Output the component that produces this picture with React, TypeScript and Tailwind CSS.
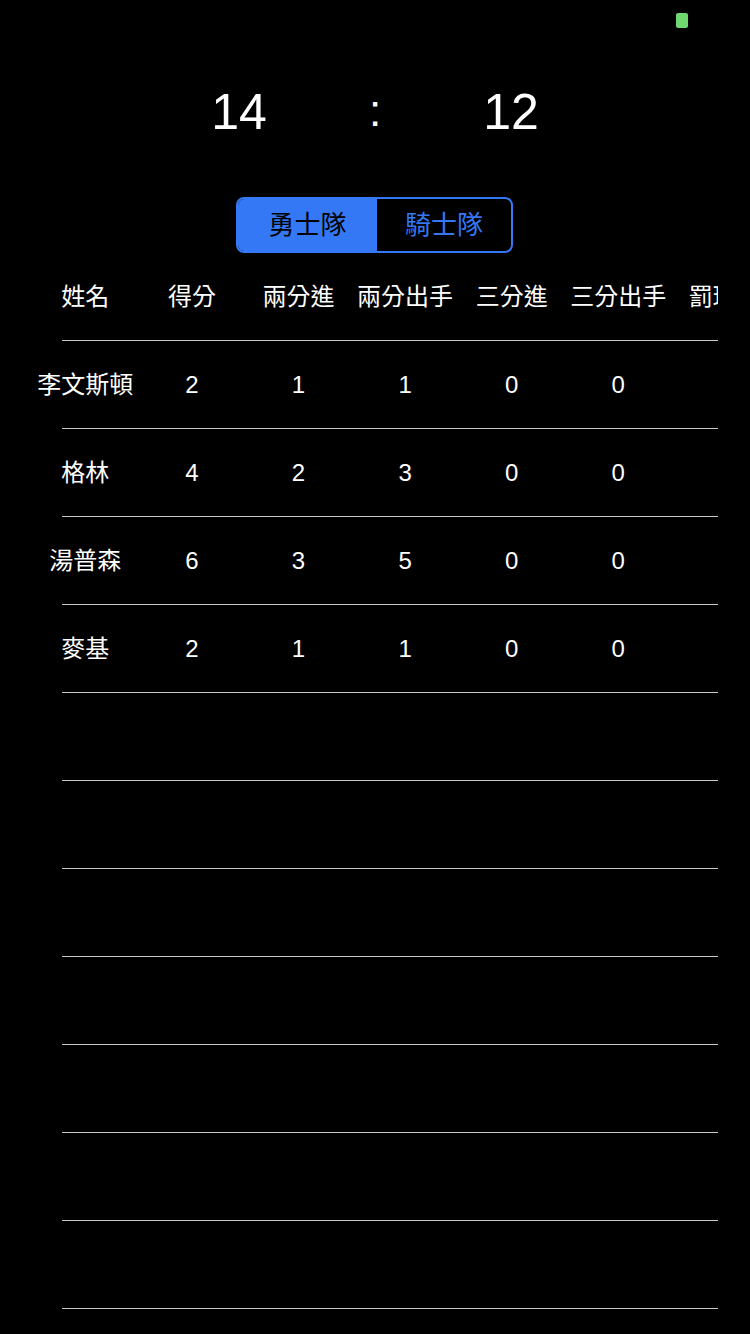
import React from "react";

const FONT = { fontFamily: '"Liberation Sans", "Noto Sans CJK TC", sans-serif' };

const headers = ["姓名", "得分", "兩分進", "兩分出手", "三分進", "三分出手", "罰球進", "罰球出手"];
const rows: (string | number)[][] = [
  ["李文斯頓", 2, 1, 1, 0, 0, "", ""],
  ["格林", 4, 2, 3, 0, 0, "", ""],
  ["湯普森", 6, 3, 5, 0, 0, "", ""],
  ["麥基", 2, 1, 1, 0, 0, "", ""],
];
const emptyRows = 7;

function Row({ cells }: { cells: (string | number)[] }) {
  return (
    <div className="flex flex-col">
      <div className="flex items-center h-[87px]">
        {cells.map((c, i) => (
          <div
            key={i}
            className="w-[106.6px] shrink-0 text-center text-[24px] leading-none text-white whitespace-nowrap"
          >
            {c}
          </div>
        ))}
      </div>
      <div className="ml-[30px] h-px bg-[#c8c8c8]" />
    </div>
  );
}

export default function App() {
  return (
    <div className="relative w-[750px] h-[1334px] bg-black overflow-hidden" style={FONT}>
      <div className="absolute left-[676px] top-[13px] w-[12px] h-[15px] rounded-[2px] bg-[#70d670]" />
      <div className="pt-[52px] flex justify-center items-center h-[172px] box-border">
        <div className="flex items-center h-[60px]">
          <div className="w-[80px] text-center text-[50px] leading-none text-white">14</div>
          <div className="w-[192px] text-center text-[44px] leading-none text-white pb-[2px]">:</div>
          <div className="w-[80px] text-center text-[50px] leading-none text-white">12</div>
        </div>
      </div>
      <div className="flex justify-center pt-[25px]">
        <div className="ml-[-1px] flex w-[277px] h-[56px] rounded-[8px] border-2 border-[#3478f6] overflow-hidden">
          <div className="w-[139px] h-full bg-[#3478f6] flex items-center justify-center text-[26px] text-black">
            勇士隊
          </div>
          <div className="flex-1 h-full flex items-center justify-center text-[26px] text-[#3478f6]">
            騎士隊
          </div>
        </div>
      </div>
      <div className="ml-[32px] w-[686px] overflow-hidden">
        <div className="w-max">
          <Row cells={headers} />
          {rows.map((r, i) => (
            <Row key={i} cells={r} />
          ))}
          {Array.from({ length: emptyRows }).map((_, i) => (
            <Row key={`e${i}`} cells={["", "", "", "", "", "", "", ""]} />
          ))}
        </div>
      </div>
    </div>
  );
}
